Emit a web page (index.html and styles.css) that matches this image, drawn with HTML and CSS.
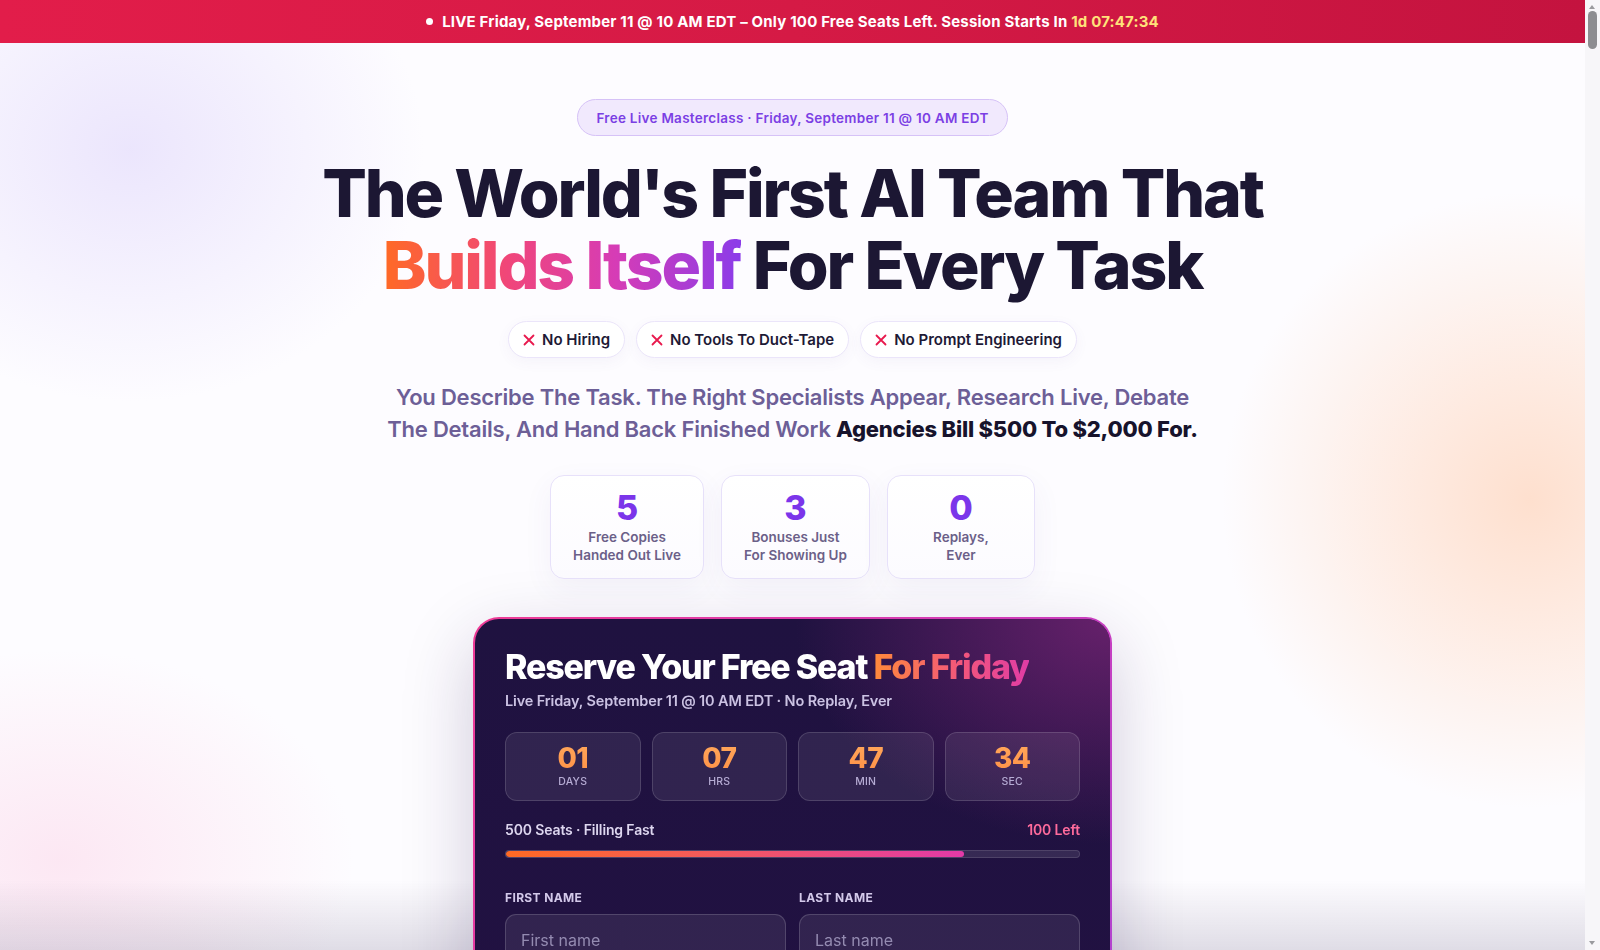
FILE: index.html
```html
<!DOCTYPE html>
<html lang="en">
<head>
<meta charset="utf-8">
<title>Free Live Masterclass</title>
<link rel="stylesheet" href="styles.css">
</head>
<body>
<div class="page">
  <div class="topbar">
    <span class="live-dot"></span>
    <span class="topbar-text">LIVE Friday, September 11 @ 10 AM EDT – Only 100 Free Seats Left. Session Starts In <span class="topbar-time">1d 07:47:34</span></span>
  </div>

  <main class="hero">
    <div class="eyebrow">Free Live Masterclass · Friday, September 11 @ 10 AM EDT</div>

    <h1 class="headline">The World's First AI Team That<br><span class="grad-text">Builds Itself</span> For Every Task</h1>

    <ul class="chips">
      <li class="chip"><svg class="chip-x" viewBox="0 0 12 12"><path d="M1.5 1.5L10.5 10.5M10.5 1.5L1.5 10.5"/></svg>No Hiring</li>
      <li class="chip"><svg class="chip-x" viewBox="0 0 12 12"><path d="M1.5 1.5L10.5 10.5M10.5 1.5L1.5 10.5"/></svg>No Tools To Duct-Tape</li>
      <li class="chip"><svg class="chip-x" viewBox="0 0 12 12"><path d="M1.5 1.5L10.5 10.5M10.5 1.5L1.5 10.5"/></svg>No Prompt Engineering</li>
    </ul>

    <p class="lede">You Describe The Task. The Right Specialists Appear, Research Live, Debate<br>The Details, And Hand Back Finished Work <strong>Agencies Bill $500 To $2,000 For.</strong></p>

    <div class="stats">
      <div class="stat"><div class="stat-num">5</div><div class="stat-label">Free Copies<br>Handed Out Live</div></div>
      <div class="stat"><div class="stat-num">3</div><div class="stat-label">Bonuses Just<br>For Showing Up</div></div>
      <div class="stat"><div class="stat-num">0</div><div class="stat-label">Replays,<br>Ever</div></div>
    </div>

    <section class="reserve">
      <h2 class="reserve-title">Reserve Your Free Seat <span class="grad-warm">For Friday</span></h2>
      <p class="reserve-sub">Live Friday, September 11 @ 10 AM EDT · No Replay, Ever</p>

      <div class="countdown">
        <div class="cd-box"><div class="cd-num">01</div><div class="cd-label">DAYS</div></div>
        <div class="cd-box"><div class="cd-num">07</div><div class="cd-label">HRS</div></div>
        <div class="cd-box"><div class="cd-num">47</div><div class="cd-label">MIN</div></div>
        <div class="cd-box"><div class="cd-num">34</div><div class="cd-label">SEC</div></div>
      </div>

      <div class="seats-row">
        <span>500 Seats · Filling Fast</span>
        <span class="seats-left">100 Left</span>
      </div>
      <div class="progress"><div class="progress-fill" style="width:80%"></div></div>

      <form class="form">
        <div class="field">
          <label class="field-label" for="fn">FIRST NAME</label>
          <input class="field-input" id="fn" type="text" placeholder="First name">
        </div>
        <div class="field">
          <label class="field-label" for="ln">LAST NAME</label>
          <input class="field-input" id="ln" type="text" placeholder="Last name">
        </div>
        <div class="field field-wide">
          <label class="field-label" for="em">EMAIL ADDRESS</label>
          <input class="field-input" id="em" type="email" placeholder="you@company.com">
        </div>
        <button class="submit" type="button">Reserve My Free Seat</button>
      </form>
    </section>
  </main>
</div>

<div class="bottom-shade"></div>
<div class="scrollbar" aria-hidden="true"><span class="scrollbar-thumb"></span></div>
</body>
</html>
```

FILE: styles.css
```css
* { box-sizing: border-box; }

html, body { margin: 0; padding: 0; }

body {
  font-family: "Inter", "Noto Sans", sans-serif;
  color: #1d1838;
  min-height: 100vh;
  background:
    radial-gradient(ellipse 420px 360px at 130px 150px, rgba(231, 224, 252, 0.8), rgba(231, 224, 252, 0) 70%),
    radial-gradient(ellipse 440px 440px at 1530px 500px, rgba(255, 214, 190, 0.75), rgba(255, 214, 190, 0) 70%),
    radial-gradient(ellipse 420px 300px at 60px 860px, rgba(252, 226, 240, 0.8), rgba(252, 226, 240, 0) 70%),
    #fdfcff;
}

.page { margin-right: 15px; }

/* top bar */
.topbar {
  height: 43px;
  display: flex;
  align-items: center;
  justify-content: center;
  gap: 9px;
  background: linear-gradient(90deg, #e21d4a 0%, #d51a45 50%, #c4133f 100%);
  color: #ffffff;
  font-size: 15px;
  font-weight: 700;
  letter-spacing: 0.012em;
}
.live-dot {
  width: 7px;
  height: 7px;
  border-radius: 50%;
  background: #ffffff;
}
.topbar-time { color: #ffe27a; }

/* hero */
.hero {
  display: flex;
  flex-direction: column;
  align-items: center;
  padding: 56px 0 80px;
}

.eyebrow {
  height: 37px;
  display: flex;
  align-items: center;
  padding: 0 18px;
  border-radius: 999px;
  background: #f1e9fd;
  border: 1px solid #d6c2f7;
  color: #7b3fe4;
  font-size: 13.5px;
  font-weight: 600;
  letter-spacing: 0.02em;
}

.headline {
  margin: 21px 0 0;
  text-align: center;
  font-family: "Inter", sans-serif;
  font-weight: 800;
  font-size: 66px;
  line-height: 72px;
  letter-spacing: -0.032em;
  color: #1c1733;
}
.grad-text {
  background: linear-gradient(90deg, #ff6a25 0%, #f0467a 35%, #d63cb6 65%, #8b3ce9 100%);
  -webkit-background-clip: text;
  background-clip: text;
  color: transparent;
}

.chips {
  list-style: none;
  margin: 20px 0 0;
  padding: 0;
  display: flex;
  gap: 11px;
}
.chip {
  height: 37px;
  display: flex;
  align-items: center;
  gap: 7px;
  padding: 0 14px;
  background: #ffffff;
  border: 1px solid #ebe5fa;
  border-radius: 999px;
  box-shadow: 0 4px 14px rgba(90, 70, 160, 0.05);
  font-size: 15px;
  font-weight: 600;
  color: #1e1a36;
}
.chip-x {
  width: 12px;
  height: 12px;
  fill: none;
  stroke: #e8194d;
  stroke-width: 1.8;
  stroke-linecap: round;
}

.lede {
  margin: 23px 0 0;
  text-align: center;
  font-family: "Inter", sans-serif;
  font-weight: 600;
  font-size: 22px;
  line-height: 32px;
  letter-spacing: -0.01em;
  color: #6d5f97;
}
.lede strong {
  font-weight: 800;
  color: #17132c;
}

.stats {
  margin-top: 30px;
  display: flex;
  gap: 17px;
}
.stat {
  min-width: 148px;
  padding: 14px 22px;
  background: linear-gradient(180deg, #ffffff, #fcfbff);
  border: 1px solid #e7e1fa;
  border-radius: 14px;
  box-shadow: 0 10px 30px rgba(90, 70, 160, 0.06);
  text-align: center;
}
.stat-num {
  font-family: "Inter", sans-serif;
  font-weight: 800;
  font-size: 34px;
  line-height: 36px;
  color: #7b35ea;
}
.stat-label {
  margin-top: 2px;
  font-size: 13.5px;
  font-weight: 600;
  line-height: 18px;
  color: #6b6088;
}

/* reserve card */
.reserve {
  position: relative;
  z-index: 2;
  width: 639px;
  margin-top: 38px;
  padding: 28px 30px 30px;
  border: 2px solid transparent;
  border-radius: 26px;
  background:
    radial-gradient(ellipse 420px 300px at 100% 0%, rgba(110, 34, 112, 0.9), rgba(110, 34, 112, 0) 75%) padding-box,
    linear-gradient(180deg, #1f1240, #221142) padding-box,
    linear-gradient(120deg, #ee3b95 0%, #d23cb8 55%, #a546d8 100%) border-box;
  box-shadow: 0 24px 70px rgba(40, 25, 80, 0.22);
  color: #ffffff;
}
.reserve-title {
  margin: 0;
  font-family: "Inter", sans-serif;
  font-weight: 800;
  font-size: 34px;
  line-height: 40px;
  letter-spacing: -0.035em;
  color: #ffffff;
}
.grad-warm {
  background: linear-gradient(90deg, #ff8a3a 0%, #f2577a 55%, #e03ca5 100%);
  -webkit-background-clip: text;
  background-clip: text;
  color: transparent;
}
.reserve-sub {
  margin: 4px 0 0;
  font-size: 14.5px;
  font-weight: 600;
  line-height: 20px;
  letter-spacing: -0.01em;
  color: #cbc2e3;
}

.countdown {
  margin-top: 21px;
  display: grid;
  grid-template-columns: repeat(4, 1fr);
  gap: 11px;
}
.cd-box {
  height: 69px;
  padding-top: 8px;
  border-radius: 12px;
  background: rgba(255, 255, 255, 0.08);
  border: 1px solid rgba(255, 255, 255, 0.14);
  text-align: center;
}
.cd-num {
  font-family: "Inter", sans-serif;
  font-weight: 800;
  font-size: 28px;
  line-height: 34px;
  letter-spacing: -0.02em;
  background: linear-gradient(180deg, #ffa95c, #ff8f45);
  -webkit-background-clip: text;
  background-clip: text;
  -webkit-text-fill-color: transparent;
}
.cd-label {
  font-size: 10.5px;
  line-height: 14px;
  font-weight: 500;
  letter-spacing: 0.02em;
  color: #b6acd4;
}

.seats-row {
  margin-top: 19px;
  display: flex;
  justify-content: space-between;
  font-size: 14px;
  font-weight: 600;
  line-height: 20px;
  letter-spacing: -0.01em;
  color: #ddd6ef;
}
.seats-left { color: #ff6b9c; }

.progress {
  margin-top: 10px;
  height: 8px;
  border-radius: 999px;
  background: rgba(255, 255, 255, 0.1);
  border: 1px solid rgba(255, 255, 255, 0.12);
  overflow: hidden;
}
.progress-fill {
  height: 100%;
  border-radius: 999px;
  background: linear-gradient(90deg, #ff6a24 0%, #f35a5c 45%, #e23aa8 100%);
}

.form {
  margin-top: 32px;
  display: grid;
  grid-template-columns: 1fr 1fr;
  gap: 20px 13px;
}
.field { display: flex; flex-direction: column; gap: 8px; }
.field-wide { grid-column: 1 / -1; }
.field-label {
  font-size: 12px;
  line-height: 16px;
  font-weight: 700;
  letter-spacing: 0.03em;
  color: #d3c9ea;
}
.field-input {
  height: 52px;
  padding: 0 15px;
  border-radius: 11px;
  border: 1px solid rgba(255, 255, 255, 0.16);
  background: rgba(255, 255, 255, 0.08);
  color: #ffffff;
  font-family: "Inter", sans-serif;
  font-size: 16px;
  outline: none;
}
.field-input::placeholder { color: #948bb1; }
.submit {
  grid-column: 1 / -1;
  height: 56px;
  border: 0;
  border-radius: 12px;
  background: linear-gradient(90deg, #ff6a24, #e23aa8);
  color: #ffffff;
  font-family: "Inter", sans-serif;
  font-size: 17px;
  font-weight: 700;
}

.bottom-shade {
  position: fixed;
  left: 0;
  right: 15px;
  bottom: 0;
  height: 70px;
  z-index: 1;
  pointer-events: none;
  background: linear-gradient(180deg, rgba(70, 60, 100, 0), rgba(70, 60, 100, 0.16));
}

/* window scrollbar */
.scrollbar {
  position: fixed;
  top: 0;
  right: 0;
  bottom: 0;
  width: 15px;
  z-index: 5;
  background: #f7f6f9;
}
.scrollbar::before,
.scrollbar::after {
  content: "";
  position: absolute;
  left: 4px;
  border-left: 3.5px solid transparent;
  border-right: 3.5px solid transparent;
}
.scrollbar::before { top: 5px; border-bottom: 4px solid #9a9a9e; }
.scrollbar::after { bottom: 5px; border-top: 4px solid #9a9a9e; }
.scrollbar-thumb {
  position: absolute;
  top: 11px;
  left: 3px;
  width: 9px;
  height: 38px;
  border-radius: 5px;
  background: #8d8d91;
}
```
